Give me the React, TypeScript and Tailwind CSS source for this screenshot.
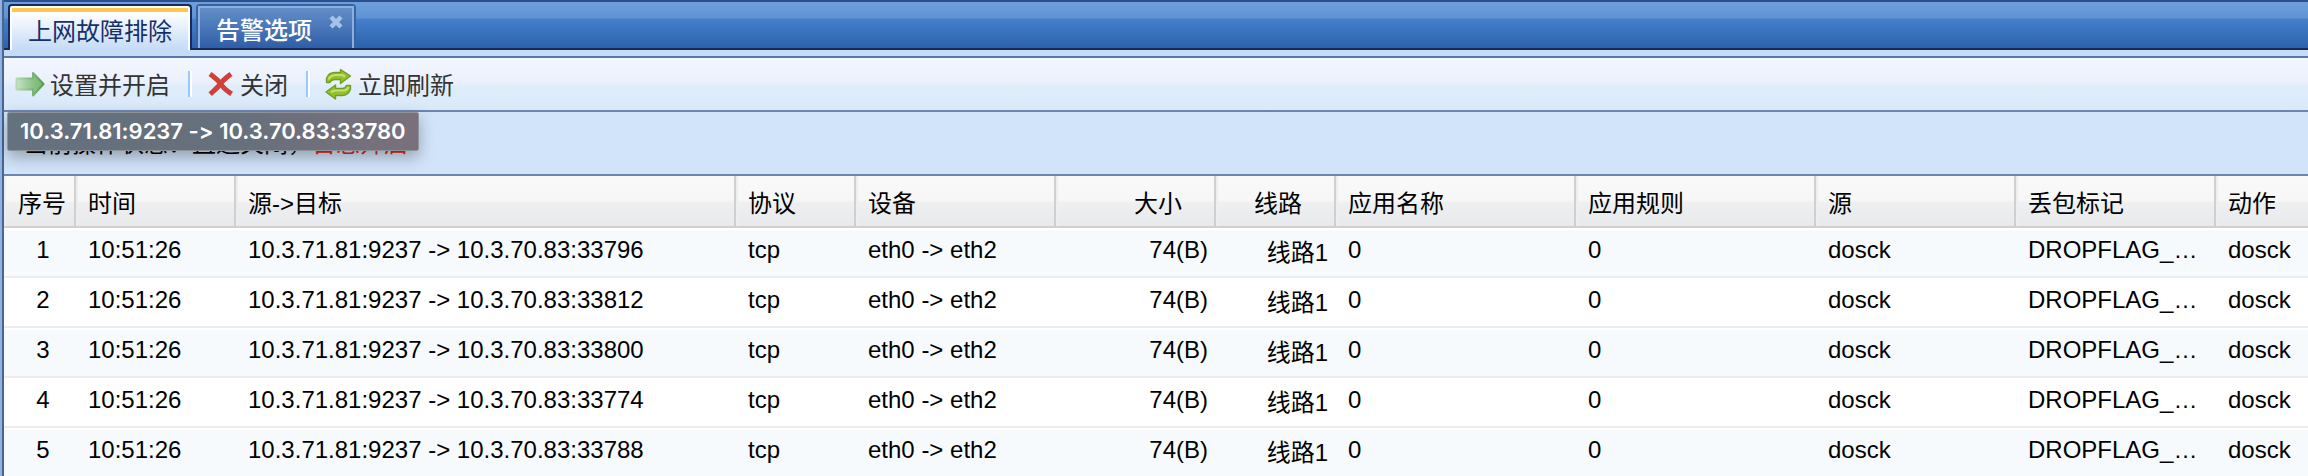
import React from "react";

type Align = "left" | "right" | "center";
type Column = { key: string; title: string; col: string; align: Align; cell?: string };

const columns: Column[] = [
  { key: "no", title: "序号", col: "w-[72px]", align: "center" },
  { key: "time", title: "时间", col: "w-[160px]", align: "left" },
  { key: "route", title: "源->目标", col: "w-[500px]", align: "left" },
  { key: "proto", title: "协议", col: "w-[120px]", align: "left" },
  { key: "device", title: "设备", col: "w-[200px]", align: "left" },
  { key: "size", title: "大小", col: "w-[160px]", align: "right" },
  { key: "line", title: "线路", col: "w-[120px]", align: "right", cell: "pt-1.5" },
  { key: "appName", title: "应用名称", col: "w-[240px]", align: "left" },
  { key: "appRule", title: "应用规则", col: "w-[240px]", align: "left" },
  { key: "source", title: "源", col: "w-[200px]", align: "left" },
  { key: "flag", title: "丢包标记", col: "w-[200px]", align: "left" },
  { key: "action", title: "动作", col: "", align: "left" },
];

const rows: Record<string, string>[] = ["33796", "33812", "33800", "33774", "33788"].map((port, i) => ({
  no: String(i + 1),
  time: "10:51:26",
  route: `10.3.71.81:9237 -> 10.3.70.83:${port}`,
  proto: "tcp",
  device: "eth0 -> eth2",
  size: "74(B)",
  line: "线路1",
  appName: "0",
  appRule: "0",
  source: "dosck",
  flag: "DROPFLAG_DOSCK",
  action: "dosck",
}));

const headAlign: Record<Align, string> = {
  left: "pl-3 text-left",
  right: "pr-8 text-right",
  center: "pl-1.5 text-center",
};
const cellAlign: Record<Align, string> = {
  left: "px-3 text-left",
  right: "pr-2 text-right",
  center: "pl-1.5 text-center",
};

function ArrowIcon() {
  return (
    <svg className="h-7 w-8 shrink-0" viewBox="0 0 32 28" aria-hidden="true">
      <defs>
        <linearGradient id="arrow" x1="0" x2="1">
          <stop offset="0" stopColor="#c6e2c6" />
          <stop offset="0.6" stopColor="#8cc487" />
          <stop offset="1" stopColor="#6fb568" />
        </linearGradient>
        <linearGradient id="arrowEdge" x1="0" x2="1">
          <stop offset="0" stopColor="#b5d9b4" />
          <stop offset="1" stopColor="#559a50" />
        </linearGradient>
      </defs>
      <path d="M2.500 8.500H19V3L29.500 14L19 25.500V19.500H2.500Z" fill="url(#arrow)" stroke="url(#arrowEdge)" strokeWidth="2" strokeLinejoin="round" />
    </svg>
  );
}

function CrossIcon() {
  return (
    <svg className="h-7 w-8 shrink-0" viewBox="0 0 32 28" aria-hidden="true">
      <path d="M8 5.500Q14 10 17 14Q19 18 25.500 22.500M25 5.500Q19 10 16.500 14Q13 18 8 22.500" fill="none" stroke="#d04038" strokeWidth="5" strokeLinecap="square" />
    </svg>
  );
}

function RefreshIcon() {
  return (
    <svg className="h-8 w-8 shrink-0" viewBox="0 0 32 32" aria-hidden="true">
      <g fill="#94c12b" stroke="#6d9f2c" strokeWidth="1.400" strokeLinejoin="round">
        <path d="M4.500 14.500V10.500Q6.500 4.500 13 4.500H18.500V1.500L28.500 8L18.500 15.500V11.500H13Q9 11.500 8 14.500Z" />
        <path d="M28.500 17.500V21Q26.500 27.500 20 27.500H13.500V31L4 24L13.500 17V20.500H20Q23.500 20.500 24.500 17.500Z" />
      </g>
      <path d="M6.500 11.500Q8.500 7 14 7H20L23 8.500M9 24L13 22.500H21Q25 22.500 26.500 19" fill="none" stroke="#c9e063" strokeWidth="2" />
    </svg>
  );
}

function Separator() {
  return (
    <div className="flex items-center pl-[18px]">
      <span className="h-[26px] w-1 border-l-2 border-r-2 border-l-[#98c8ff] border-r-white" />
    </div>
  );
}

export default function App() {
  return (
    <div className="min-h-[476px] overflow-x-hidden border-l-2 border-[#8db2e3] bg-white font-['Liberation_Sans','Noto_Sans_CJK_SC',sans-serif] text-2xl leading-7 text-black">
      <div className="border-l-2 border-[#4d648f]">
        <nav role="tablist" className="flex h-[50px] items-end gap-1 border-t-2 border-[#2b4f8d] bg-[linear-gradient(#6da0db_0px,#5f93d1_16px,#4680ca_17px,#2c62ac_46px,#172a54_46px)] pl-1">
          <button role="tab" aria-selected="true" className="h-[46px] w-[184px] rounded-t-sm border-2 border-b-0 border-[#172a5a] bg-white p-0.5 pb-0 text-[#15306e]">
            <span className="flex h-full items-center justify-center border-t-4 border-[#fdc750] bg-[linear-gradient(#ffffff,#c4daf6)] pt-0.5">
              上网故障排除
            </span>
          </button>
          <div className="mb-0.5 flex h-11 w-40 items-start rounded-t-sm border-2 border-b-0 border-[#3563a4] bg-[linear-gradient(#6491ca,#2f5ea8)]">
            <div className="flex h-full w-full justify-between border-2 border-b-0 border-[#8bb0df] pl-4 pr-2">
              <button role="tab" aria-selected="false" className="pt-1.5 font-medium text-white">
                告警选项
              </button>
              <button aria-label="关闭标签" className="mt-1.5 h-4 w-4">
                <svg viewBox="0 0 16 16" className="h-4 w-4" aria-hidden="true">
                  <path d="M3 3L13 13M13 3L3 13" stroke="#a5c3e8" strokeWidth="4.500" />
                </svg>
              </button>
            </div>
          </div>
        </nav>
        <div className="h-2 border-b-2 border-[#5b77a8] bg-[#c5dbf7]" />

        <div className="flex h-[54px] items-center border-b-2 border-[#6d86b0] bg-[linear-gradient(#f2f6ff,#eaf0fb_26px,#e0edfb_27px,#d9e9f9)] pl-2.5 text-[#333333]">
          <button className="flex items-center gap-1">
            <ArrowIcon />
            <span className="pt-1">设置并开启</span>
          </button>
          <Separator />
          <button className="flex items-center gap-1 pl-3">
            <CrossIcon />
            <span className="pt-1">关闭</span>
          </button>
          <Separator />
          <button className="flex items-center gap-1 pl-3">
            <RefreshIcon />
            <span className="pt-1">立即刷新</span>
          </button>
        </div>

        <div className="relative h-16 border-b-2 border-[#6d86b0] bg-[#d2e4fa] pl-5 pt-[18px]">
          <p>
            当前操作状态：直通关闭，<span className="text-[#ee2211]">日志开启</span>
          </p>
          <div role="tooltip" className="absolute left-[3px] top-0 rounded-[2px] border border-[#8e9299] bg-[linear-gradient(90deg,#64717e,#66707c_55%,#7a707c)] px-3 pb-[5px] pt-1 font-['Inter',sans-serif] text-[22px] font-semibold text-white shadow-[0_6px_16px_rgba(0,0,0,0.3)] [font-feature-settings:'calt'_0]">
            10.3.71.81:9237 -&gt; 10.3.70.83:33780
          </div>
        </div>

        <table className="w-full table-fixed border-separate border-spacing-0">
          <colgroup>
            {columns.map((c) => (
              <col key={c.key} className={c.col} />
            ))}
          </colgroup>
          <thead>
            <tr className="h-[52px] bg-[linear-gradient(#f9f9f9,#f7f7f7_24px,#eeeff0_27px,#e8e9ea)]">
              {columns.map((c) => (
                <th
                  key={c.key}
                  scope="col"
                  className={`whitespace-nowrap border-b-2 border-r-2 border-[#d0d0d0] pb-0 pt-1.5 font-normal shadow-[inset_2px_0_0_#eeeeee] last:border-r-0 ${headAlign[c.align]}`}
                >
                  {c.title}
                </th>
              ))}
            </tr>
          </thead>
          <tbody>
            {rows.map((r) => (
              <tr key={r.no} className="h-[50px] odd:bg-[#f6fafd] even:bg-white">
                {columns.map((c) => (
                  <td key={c.key} className={`overflow-hidden text-ellipsis whitespace-nowrap border-b-2 border-t-2 border-b-[#ededed] border-t-white py-0 ${cellAlign[c.align]}`}>
                    <div className={`overflow-hidden text-ellipsis pb-1.5 ${c.cell ?? ""}`}>{r[c.key]}</div>
                  </td>
                ))}
              </tr>
            ))}
          </tbody>
        </table>
      </div>
    </div>
  );
}
